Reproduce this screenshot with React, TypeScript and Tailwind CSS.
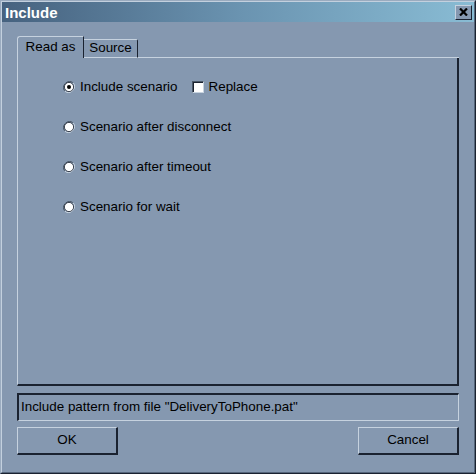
import React from "react";

const font = { fontFamily: '"Liberation Sans", Arial, sans-serif' };

const Radio = ({ checked }: { checked?: boolean }) => (
  <svg width="12" height="12" viewBox="0 0 12 12" className="shrink-0">
    <path d="M10.2 1.8 A6 6 0 0 0 1.8 10.2" fill="none" stroke="#4a5868" strokeWidth="1" />
    <path d="M1.8 10.2 A6 6 0 0 0 10.2 1.8" fill="none" stroke="#c8d4e0" strokeWidth="1" />
    <circle cx="6" cy="6" r="4.6" fill="#ffffff" stroke="#1a2230" strokeWidth="0.8" />
    {checked && <circle cx="6" cy="6" r="2" fill="#000000" />}
  </svg>
);

const RadioRow = ({ label, checked, children }: { label: string; checked?: boolean; children?: React.ReactNode }) => (
  <div className="flex items-center h-[16px]">
    <Radio checked={checked} />
    <span className="ml-[5px] text-[13.4px] text-black leading-none">{label}</span>
    {children}
  </div>
);

const Button = ({ label }: { label: string }) => (
  <div className="w-[101px] h-[28px] flex items-center justify-center border-t border-l border-r-2 border-b-2 border-t-[#c6d2df] border-l-[#c6d2df] border-r-[#1a2230] border-b-[#1a2230] text-[13.4px] text-black">
    {label}
  </div>
);

export default function App() {
  return (
    <div style={font} className="w-[476px] h-[474px] bg-[#8598b0] border-t border-l border-r border-b border-t-[#9aabbf] border-l-[#9aabbf] border-r-[#1a2230] border-b-[#1a2230]">
      <div className="w-full h-full flex flex-col border-t border-l border-r border-b border-t-[#c3d0de] border-l-[#c3d0de] border-r-[#55657a] border-b-[#55657a]">
        {/* title bar */}
        <div className="h-[20px] flex items-center justify-between bg-gradient-to-r from-[#46627f] via-[#6a93b0] to-[#89bcd4] pl-[3px] pr-[2px]">
          <span className="text-white font-bold text-[15px] leading-none">Include</span>
          <div className="w-[17px] h-[15px] bg-[#8598b0] border-t border-l border-r border-b border-t-[#c6d2df] border-l-[#c6d2df] border-r-[#1a2230] border-b-[#1a2230] flex items-center justify-center">
            <svg width="9" height="8" viewBox="0 0 9 8">
              <path d="M1 0.5 L8 7.5 M8 0.5 L1 7.5" stroke="#000" strokeWidth="2.2" />
            </svg>
          </div>
        </div>

        <div className="flex-1 flex flex-col px-[15px] pt-[14px]">
          {/* tabs */}
          <div className="flex items-end h-[22px]">
            <div className="w-[67px] h-[22px] flex items-center justify-center text-[13.4px] text-black border-t border-l border-r border-t-[#c6d2df] border-l-[#c6d2df] border-r-[#1a2230] rounded-tl-[3px]">
              Read as
            </div>
            <div className="w-[54px] h-[19px] flex items-center justify-center text-[13.4px] text-black border-t border-r border-b border-t-[#c6d2df] border-r-[#1a2230] border-b-[#c6d2df] rounded-tr-[2px]">
              Source
            </div>
            <div className="flex-1 border-b border-b-[#c6d2df]" />
          </div>

          {/* panel */}
          <div className="h-[328px] border-l border-r-2 border-b-2 border-l-[#c6d2df] border-r-[#1a2230] border-b-[#1a2230]">
            <div className="flex flex-col gap-[24px] pl-[45px] pt-[21px]">
              <RadioRow label="Include scenario" checked>
                <div className="ml-[14px] w-[12px] h-[12px] bg-white border-t border-l border-r border-b border-t-[#4a5868] border-l-[#4a5868] border-r-[#c8d4e0] border-b-[#c8d4e0] shadow-[inset_1px_1px_0_#1a2230]" />
                <span className="ml-[5px] text-[13.4px] text-black leading-none">Replace</span>
              </RadioRow>
              <RadioRow label="Scenario after disconnect" />
              <RadioRow label="Scenario after timeout" />
              <RadioRow label="Scenario for wait" />
            </div>
          </div>

          {/* status */}
          <div className="mt-[7px] h-[28px] flex items-center pl-[2px] border-t-2 border-l-2 border-r border-b border-t-[#1a2230] border-l-[#1a2230] border-r-[#c6d2df] border-b-[#c6d2df] text-[13.4px] text-black">
            Include pattern from file "DeliveryToPhone.pat"
          </div>

          {/* buttons */}
          <div className="mt-[6px] flex justify-between">
            <Button label="OK" />
            <Button label="Cancel" />
          </div>
        </div>
      </div>
    </div>
  );
}
